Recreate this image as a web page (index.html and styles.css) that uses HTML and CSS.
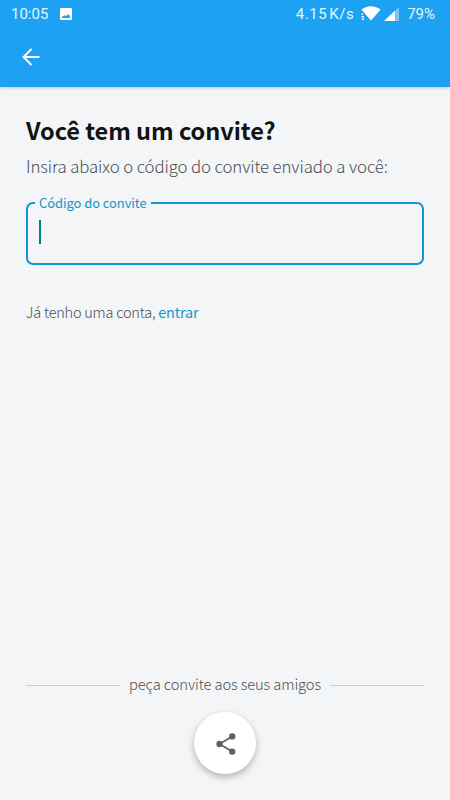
FILE: index.html
```html
<!DOCTYPE html>
<html lang="pt-BR">
<head>
    <meta charset="UTF-8">
    <meta name="viewport" content="width=device-width, initial-scale=1.0">
    <title>Convite</title>
    <link rel="stylesheet" href="styles.css">
</head>
<body>
    <header class="topbar">
        <div class="status">
            <span class="clock">10:05</span>
            <svg class="photo" width="12" height="12" viewBox="0 0 12 12">
                <path fill="#fff" fill-rule="evenodd" d="M1 0h10a1 1 0 0 1 1 1v10a1 1 0 0 1-1 1H1a1 1 0 0 1-1-1V1a1 1 0 0 1 1-1zM2 10h8V8L8 6.300 6.300 8 4.300 7.200 2 9z"/>
            </svg>
            <span class="speed">4.15 K/s</span>
            <svg class="wifi" width="20" height="15" viewBox="0 0 20 15">
                <path fill="#fff" d="M.5 3.700C5.500-1 14.500-1 19.500 3.700L10 14.500z"/>
                <path fill="#1da1f2" d="M0 6h2l2 3v5H0z"/>
                <path fill="#fff" d="M.5 7.500h1.500v1.500H.5zM.5 10h2.500v1.500H.5zM1 12.500h2V14H1z"/>
            </svg>
            <svg class="signal" width="15" height="14" viewBox="0 0 15 14">
                <path fill="#fff" fill-opacity=".4" d="M15 0v14H0z"/>
                <path fill="#fff" d="M11 3.700V14H0z"/>
            </svg>
            <span class="battery">79%</span>
        </div>
        <a class="back" href="#" aria-label="Voltar">
            <svg width="18" height="18" viewBox="0 0 18 18" fill="none" stroke="#fff" stroke-width="1.900">
                <path d="M17.500 9H1.500M9.500 1L1.500 9l8 8"/>
            </svg>
        </a>
    </header>

    <main class="content">
        <h1>Você tem um convite?</h1>
        <p class="intro">Insira abaixo o código do convite enviado a você:</p>
        <fieldset class="field">
            <legend>Código do convite</legend>
            <div class="caret"></div>
        </fieldset>
        <p class="login">Já tenho uma conta, <a href="#">entrar</a></p>
    </main>

    <footer class="footer">
        <div class="divider"><span>peça convite aos seus amigos</span></div>
        <button class="share" aria-label="Compartilhar">
            <svg width="20" height="22" viewBox="0 0 20 22">
                <path fill="none" stroke="#616161" stroke-width="1.800" d="M16.200 3.400L3.500 11l12.700 7.600"/>
                <g fill="#616161">
                    <circle cx="16.200" cy="3.400" r="3.200"/>
                    <circle cx="3.500" cy="11" r="3.200"/>
                    <circle cx="16.200" cy="18.600" r="3.200"/>
                </g>
            </svg>
        </button>
    </footer>
</body>
</html>
```

FILE: styles.css
```css
* {
    box-sizing: border-box;
}
body {
    margin: 0;
    height: 800px;
    display: flex;
    flex-direction: column;
    background-color: #f3f5f7;
    color: #4c4e51;
    font-family: "Noto Sans CJK SC", "Noto Sans", sans-serif;
    font-weight: 300;
    overflow: hidden;
}
.topbar {
    height: 87px;
    background-color: #1da1f2;
    box-shadow: 0 1px 3px rgba(0, 0, 0, 0.2);
}
.status {
    display: flex;
    align-items: center;
    height: 27px;
    padding: 0 15px 0 11px;
    color: #e0f8ff;
    font-family: Roboto, sans-serif;
    font-size: 15px;
    font-weight: 400;
    white-space: nowrap;
}
.photo {
    margin-left: 12px;
}
.speed {
    margin-left: auto;
    margin-right: 7px;
    letter-spacing: 0.5px;
    word-spacing: -2px;
}
.signal {
    margin-left: 3px;
    margin-right: 8px;
}
.back {
    display: flex;
    width: 18px;
    margin: 21px 0 0 22px;
}
.content {
    padding: 0 26px;
}
h1, p {
    margin: 0;
    white-space: nowrap;
}
h1 {
    margin-top: 26px;
    color: #111315;
    font-size: 23.5px;
    font-weight: 700;
    line-height: 34px;
    letter-spacing: -0.05px;
}
.intro {
    margin-top: 6px;
    font-size: 16.8px;
    line-height: 26px;
    letter-spacing: -0.1px;
}
.field {
    height: 70px;
    margin: 16px 0 0;
    padding: 0 11px;
    border: 2px solid #1594d0;
    border-radius: 7px;
}
.field legend {
    margin-left: -4px;
    padding: 0 4px;
    color: #1594c8;
    font-size: 13px;
    font-weight: 400;
    line-height: 16px;
    letter-spacing: -0.08px;
}
.caret {
    width: 2px;
    height: 24px;
    margin-top: 9px;
    background-color: #00857a;
}
.login {
    margin-top: 36px;
    font-size: 14.5px;
    line-height: 22px;
    letter-spacing: -0.22px;
}
.login a {
    color: #1597c6;
    font-weight: 400;
    text-decoration: none;
}
.footer {
    display: flex;
    flex-direction: column;
    align-items: center;
    margin-top: auto;
    padding: 0 26px 26px;
}
.divider {
    display: flex;
    align-items: center;
    gap: 9px;
    width: 100%;
    font-size: 14.7px;
    line-height: 22px;
    letter-spacing: -0.1px;
    white-space: nowrap;
}
.divider span {
    padding-bottom: 2px;
}
.divider::before, .divider::after {
    content: "";
    flex: 1;
    height: 1px;
    background-color: #c9cccd;
}
.share {
    display: flex;
    align-items: center;
    justify-content: center;
    width: 62px;
    height: 62px;
    margin-top: 15px;
    padding: 1px 0 0 1px;
    border: 0;
    border-radius: 50%;
    background-color: #fff;
    box-shadow: 0 3px 7px rgba(0, 0, 0, 0.28);
}
```
